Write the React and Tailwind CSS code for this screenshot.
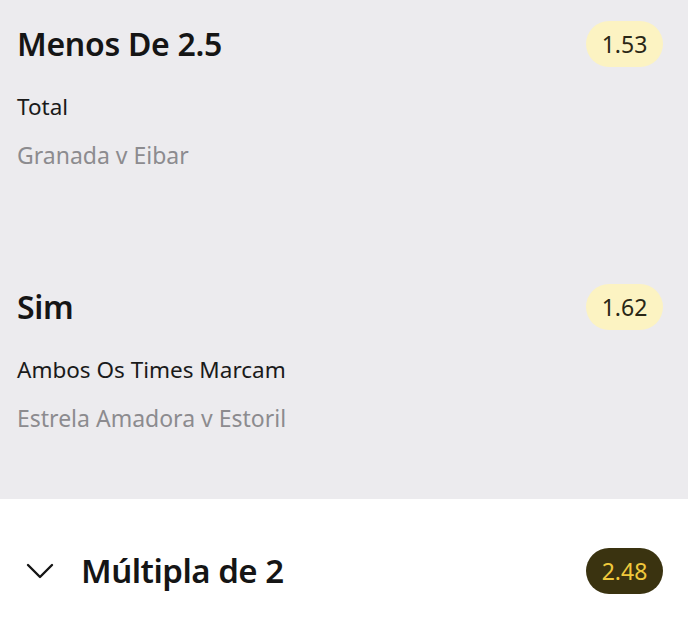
import React from 'react';

const selections = [
  { pick: 'Menos De 2.5', market: 'Total', event: 'Granada v Eibar', odds: '1.53' },
  { pick: 'Sim', market: 'Ambos Os Times Marcam', event: 'Estrela Amadora v Estoril', odds: '1.62' },
];

const OddsPill = ({ value, dark }) => (
  <span
    className={`flex h-[46px] w-[77px] items-center justify-center rounded-full text-[23px] ${
      dark ? 'bg-[#3a3310] text-[#f0c93c]' : 'bg-[#fcf3c2] text-[#2a2716]'
    }`}
  >
    {value}
  </span>
);

const App = () => {
  return (
    <div className="h-[618px] w-[688px] overflow-hidden bg-white font-['Noto_Sans',sans-serif]">
      {/* Selections list */}
      <div className="flex h-[499px] flex-col overflow-hidden bg-[#ecebee] px-[17px]">
        {selections.map((s, i) => (
          <div key={i} className="flex h-[263px] shrink-0 items-start justify-between pt-[21px]">
            <div className="flex flex-col">
              <h2 className="text-[32px] font-semibold leading-[46px] tracking-[-0.3px] text-[#151515]">{s.pick}</h2>
              <p className="mt-[24px] text-[22.5px] leading-[32px] text-[#1a1a1a]">{s.market}</p>
              <p className="mt-[16px] text-[23px] leading-[32px] text-[#8c8b8f]">{s.event}</p>
            </div>
            <div className="mr-[8px]">
              <OddsPill value={s.odds} />
            </div>
          </div>
        ))}
      </div>

      {/* Bet slip footer */}
      <div className="flex items-center justify-between pl-[26px] pr-[25px] pt-[49px]">
        <div className="flex items-center gap-[27px]">
          <svg width="28" height="16" viewBox="0 0 28 16" fill="none" stroke="#151515" strokeWidth="2.4" strokeLinecap="round" strokeLinejoin="round">
            <path d="M2 2l12 12L26 2" />
          </svg>
          <span className="text-[33px] font-semibold leading-[46px] tracking-[-0.5px] text-[#151515]">Múltipla de 2</span>
        </div>
        <OddsPill value="2.48" dark />
      </div>
    </div>
  );
};

export default App;
